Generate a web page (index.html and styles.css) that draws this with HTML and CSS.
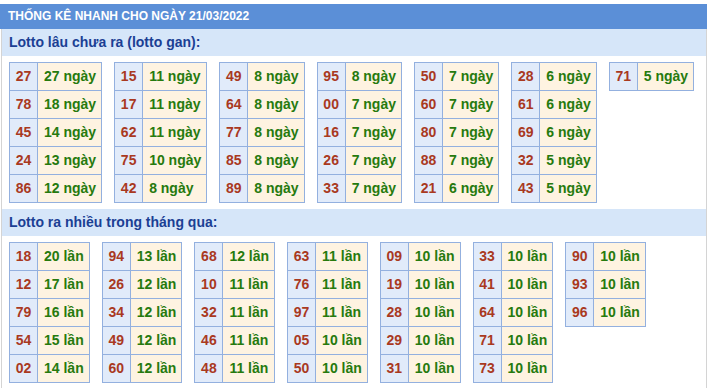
FILE: index.html
```html
<!DOCTYPE html>
<html lang="vi">
<head>
<meta charset="utf-8">
<title>Thống kê nhanh</title>
<link rel="stylesheet" href="styles.css">
</head>
<body>
<div class="box">
  <div class="title">THỐNG KÊ NHANH CHO NGÀY 21/03/2022</div>
  <div class="sub">Lotto lâu chưa ra (lotto gan):</div>
  <div class="grid">
    <table><tr><td class="n">27</td><td class="d">27 ngày</td></tr><tr><td class="n">78</td><td class="d">18 ngày</td></tr><tr><td class="n">45</td><td class="d">14 ngày</td></tr><tr><td class="n">24</td><td class="d">13 ngày</td></tr><tr><td class="n">86</td><td class="d">12 ngày</td></tr></table>
    <table><tr><td class="n">15</td><td class="d">11 ngày</td></tr><tr><td class="n">17</td><td class="d">11 ngày</td></tr><tr><td class="n">62</td><td class="d">11 ngày</td></tr><tr><td class="n">75</td><td class="d">10 ngày</td></tr><tr><td class="n">42</td><td class="d">8 ngày</td></tr></table>
    <table><tr><td class="n">49</td><td class="d">8 ngày</td></tr><tr><td class="n">64</td><td class="d">8 ngày</td></tr><tr><td class="n">77</td><td class="d">8 ngày</td></tr><tr><td class="n">85</td><td class="d">8 ngày</td></tr><tr><td class="n">89</td><td class="d">8 ngày</td></tr></table>
    <table><tr><td class="n">95</td><td class="d">8 ngày</td></tr><tr><td class="n">00</td><td class="d">7 ngày</td></tr><tr><td class="n">16</td><td class="d">7 ngày</td></tr><tr><td class="n">26</td><td class="d">7 ngày</td></tr><tr><td class="n">33</td><td class="d">7 ngày</td></tr></table>
    <table><tr><td class="n">50</td><td class="d">7 ngày</td></tr><tr><td class="n">60</td><td class="d">7 ngày</td></tr><tr><td class="n">80</td><td class="d">7 ngày</td></tr><tr><td class="n">88</td><td class="d">7 ngày</td></tr><tr><td class="n">21</td><td class="d">6 ngày</td></tr></table>
    <table><tr><td class="n">28</td><td class="d">6 ngày</td></tr><tr><td class="n">61</td><td class="d">6 ngày</td></tr><tr><td class="n">69</td><td class="d">6 ngày</td></tr><tr><td class="n">32</td><td class="d">5 ngày</td></tr><tr><td class="n">43</td><td class="d">5 ngày</td></tr></table>
    <table><tr><td class="n">71</td><td class="d">5 ngày</td></tr></table>
  </div>
  <div class="sub">Lotto ra nhiều trong tháng qua:</div>
  <div class="grid">
    <table><tr><td class="n">18</td><td class="d">20 lần</td></tr><tr><td class="n">12</td><td class="d">17 lần</td></tr><tr><td class="n">79</td><td class="d">16 lần</td></tr><tr><td class="n">54</td><td class="d">15 lần</td></tr><tr><td class="n">02</td><td class="d">14 lần</td></tr></table>
    <table><tr><td class="n">94</td><td class="d">13 lần</td></tr><tr><td class="n">26</td><td class="d">12 lần</td></tr><tr><td class="n">34</td><td class="d">12 lần</td></tr><tr><td class="n">49</td><td class="d">12 lần</td></tr><tr><td class="n">60</td><td class="d">12 lần</td></tr></table>
    <table><tr><td class="n">68</td><td class="d">12 lần</td></tr><tr><td class="n">10</td><td class="d">11 lần</td></tr><tr><td class="n">32</td><td class="d">11 lần</td></tr><tr><td class="n">46</td><td class="d">11 lần</td></tr><tr><td class="n">48</td><td class="d">11 lần</td></tr></table>
    <table><tr><td class="n">63</td><td class="d">11 lần</td></tr><tr><td class="n">76</td><td class="d">11 lần</td></tr><tr><td class="n">97</td><td class="d">11 lần</td></tr><tr><td class="n">05</td><td class="d">10 lần</td></tr><tr><td class="n">50</td><td class="d">10 lần</td></tr></table>
    <table><tr><td class="n">09</td><td class="d">10 lần</td></tr><tr><td class="n">19</td><td class="d">10 lần</td></tr><tr><td class="n">28</td><td class="d">10 lần</td></tr><tr><td class="n">29</td><td class="d">10 lần</td></tr><tr><td class="n">31</td><td class="d">10 lần</td></tr></table>
    <table><tr><td class="n">33</td><td class="d">10 lần</td></tr><tr><td class="n">41</td><td class="d">10 lần</td></tr><tr><td class="n">64</td><td class="d">10 lần</td></tr><tr><td class="n">71</td><td class="d">10 lần</td></tr><tr><td class="n">73</td><td class="d">10 lần</td></tr></table>
    <table><tr><td class="n">90</td><td class="d">10 lần</td></tr><tr><td class="n">93</td><td class="d">10 lần</td></tr><tr><td class="n">96</td><td class="d">10 lần</td></tr></table>
  </div>
</div>
</body>
</html>
```
FILE: styles.css
```css
html, body {
  margin: 0;
  padding: 0;
  background: #ffffff;
}
body {
  padding-top: 4px;
  font-family: "Liberation Sans", Arial, sans-serif;
}
.box {
  width: 704px;
  margin-left: 1px;
  border-left: 1px solid #d4d4d4;
  border-right: 1px solid #d4d4d4;
  padding-bottom: 6px;
}
.title {
  margin-left: -2px;
  margin-right: -1px;
  height: 25px;
  line-height: 25px;
  background: #5b8fd7;
  color: #ffffff;
  font-size: 12px;
  font-weight: bold;
  padding-left: 8px;
}
.sub {
  height: 27px;
  line-height: 27px;
  background: #d6e6f9;
  color: #1b3f94;
  font-size: 14px;
  font-weight: bold;
  padding-left: 7px;
}
.grid {
  display: flex;
  flex-wrap: wrap;
  align-items: flex-start;
  gap: 12px;
  padding: 6px 0 6px 7px;
}
.grid:last-child {
  padding-bottom: 0;
}
table {
  border-collapse: collapse;
}
td {
  border: 1px solid #93b0df;
  padding: 0;
  line-height: 27px;
  font-size: 14px;
  font-weight: bold;
  white-space: nowrap;
}
td.n {
  width: 27px;
  text-align: center;
  background: #e1ebfa;
  color: #a9391f;
}
td.d {
  padding: 0 5px 0 6px;
  text-align: left;
  background: #fef3e1;
  color: #267a0e;
}
```
